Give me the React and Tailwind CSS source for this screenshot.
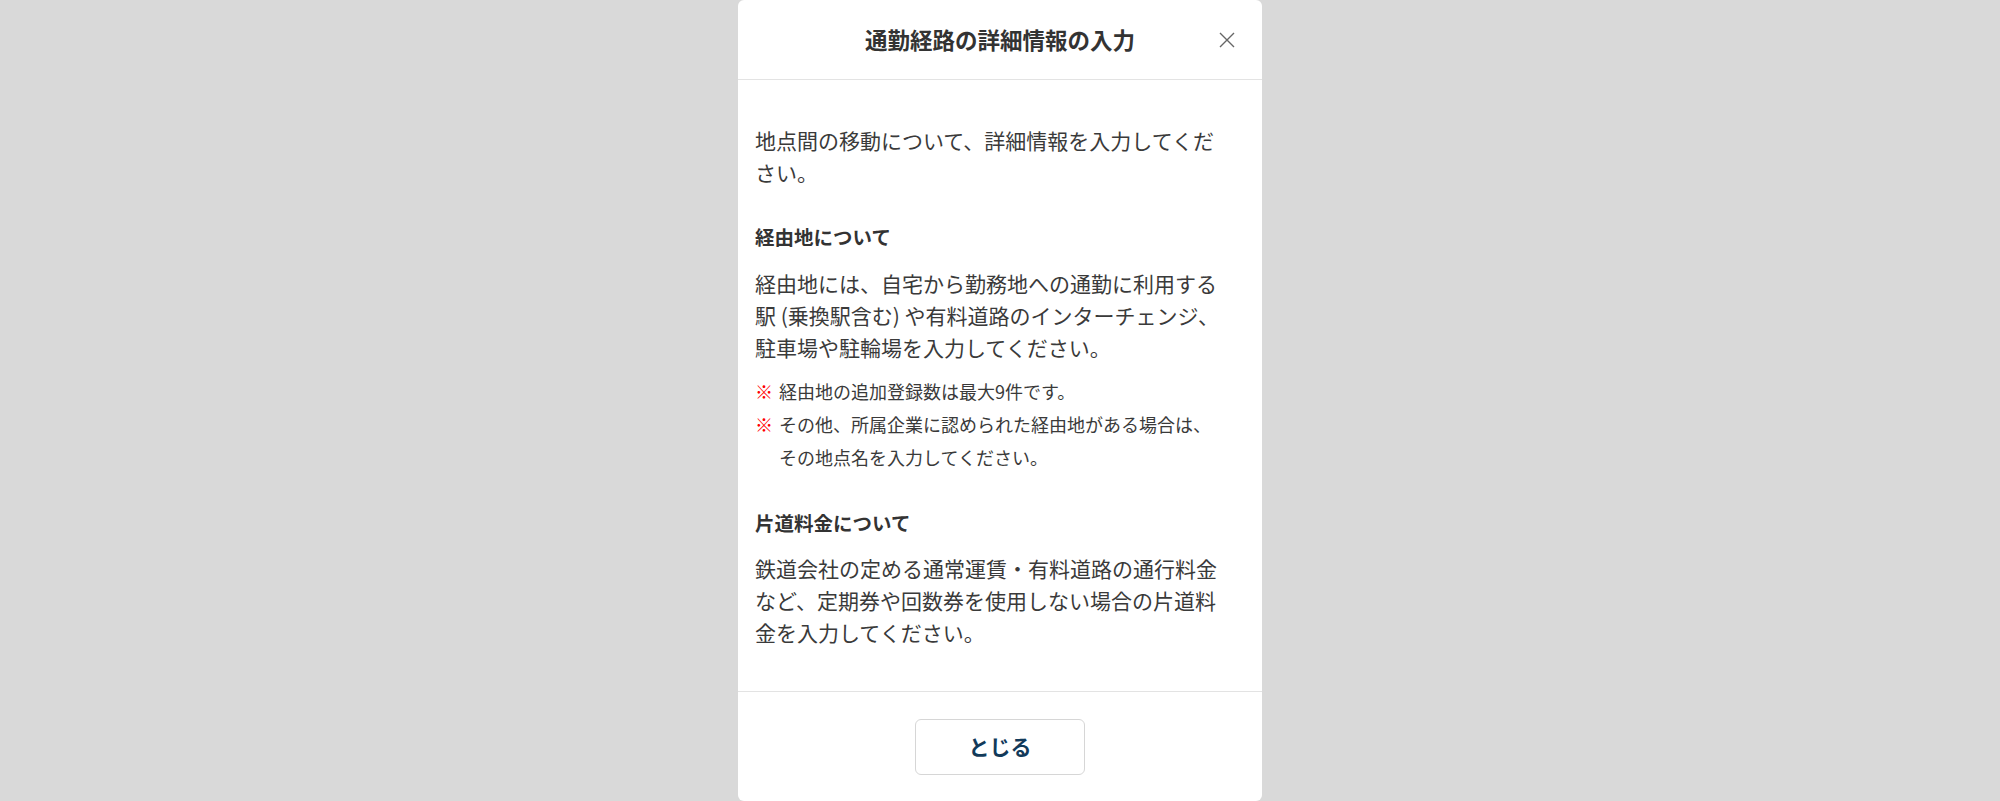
import React from "react";

function Note({ children }) {
  return (
    <li className="flex">
      <span className="w-[24px] shrink-0 font-bold text-[#ff0000]">※</span>
      <span>{children}</span>
    </li>
  );
}

function RouteDetailModal() {
  return (
    <div
      className="min-h-screen bg-[#d9d9d9] flex justify-center"
      style={{ fontFamily: '"Noto Sans CJK JP", "Noto Sans", sans-serif' }}
    >
      <div className="bg-white w-[524px] h-[801px] rounded-md flex flex-col overflow-hidden">
        <div className="h-[80px] shrink-0 border-b border-[#e3e3e3] grid grid-cols-[1fr_auto_1fr] items-center">
          <div />
          <h2 className="text-[22.5px] font-bold text-[#333] leading-none">
            通勤経路の詳細情報の入力
          </h2>
          <div className="flex justify-end pr-[27px]">
            <button type="button" aria-label="Close" className="text-[#666]">
              <svg width="16" height="16" viewBox="0 0 16 16" fill="none" stroke="currentColor" strokeWidth="1.4">
                <path d="M1 1L15 15M15 1L1 15" />
              </svg>
            </button>
          </div>
        </div>

        <div className="flex-1 pl-[17px] pr-[31px] pt-[44px] text-[#3a3a3a]">
          <p className="text-[21px] leading-[32px]">
            地点間の移動について、詳細情報を入力してください。
          </p>

          <h3 className="mt-[34px] text-[19.5px] leading-[30px] font-bold text-[#333]">
            経由地について
          </h3>
          <p className="mt-[15px] text-[21px] leading-[32px]">
            経由地には、自宅から勤務地への通勤に利用する駅 (乗換駅含む) や有料道路のインターチェンジ、駐車場や駐輪場を入力してください。
          </p>
          <ul className="mt-[12px] pr-[12px] text-[18px] leading-[33px]">
            <Note>経由地の追加登録数は最大9件です。</Note>
            <Note>その他、所属企業に認められた経由地がある場合は、その地点名を入力してください。</Note>
          </ul>

          <h3 className="mt-[34px] text-[19.5px] leading-[30px] font-bold text-[#333]">
            片道料金について
          </h3>
          <p className="mt-[14px] text-[21px] leading-[32px]">
            鉄道会社の定める通常運賃・有料道路の通行料金など、定期券や回数券を使用しない場合の片道料金を入力してください。
          </p>
        </div>

        <div className="h-[110px] shrink-0 border-t border-[#e3e3e3] flex justify-center pt-[27px]">
          <button
            type="button"
            className="w-[170px] h-[56px] border border-[#d6d6d6] rounded-md text-[21px] font-bold text-[#123a5a]"
          >
            とじる
          </button>
        </div>
      </div>
    </div>
  );
}

export default function App() {
  return <RouteDetailModal />;
}
